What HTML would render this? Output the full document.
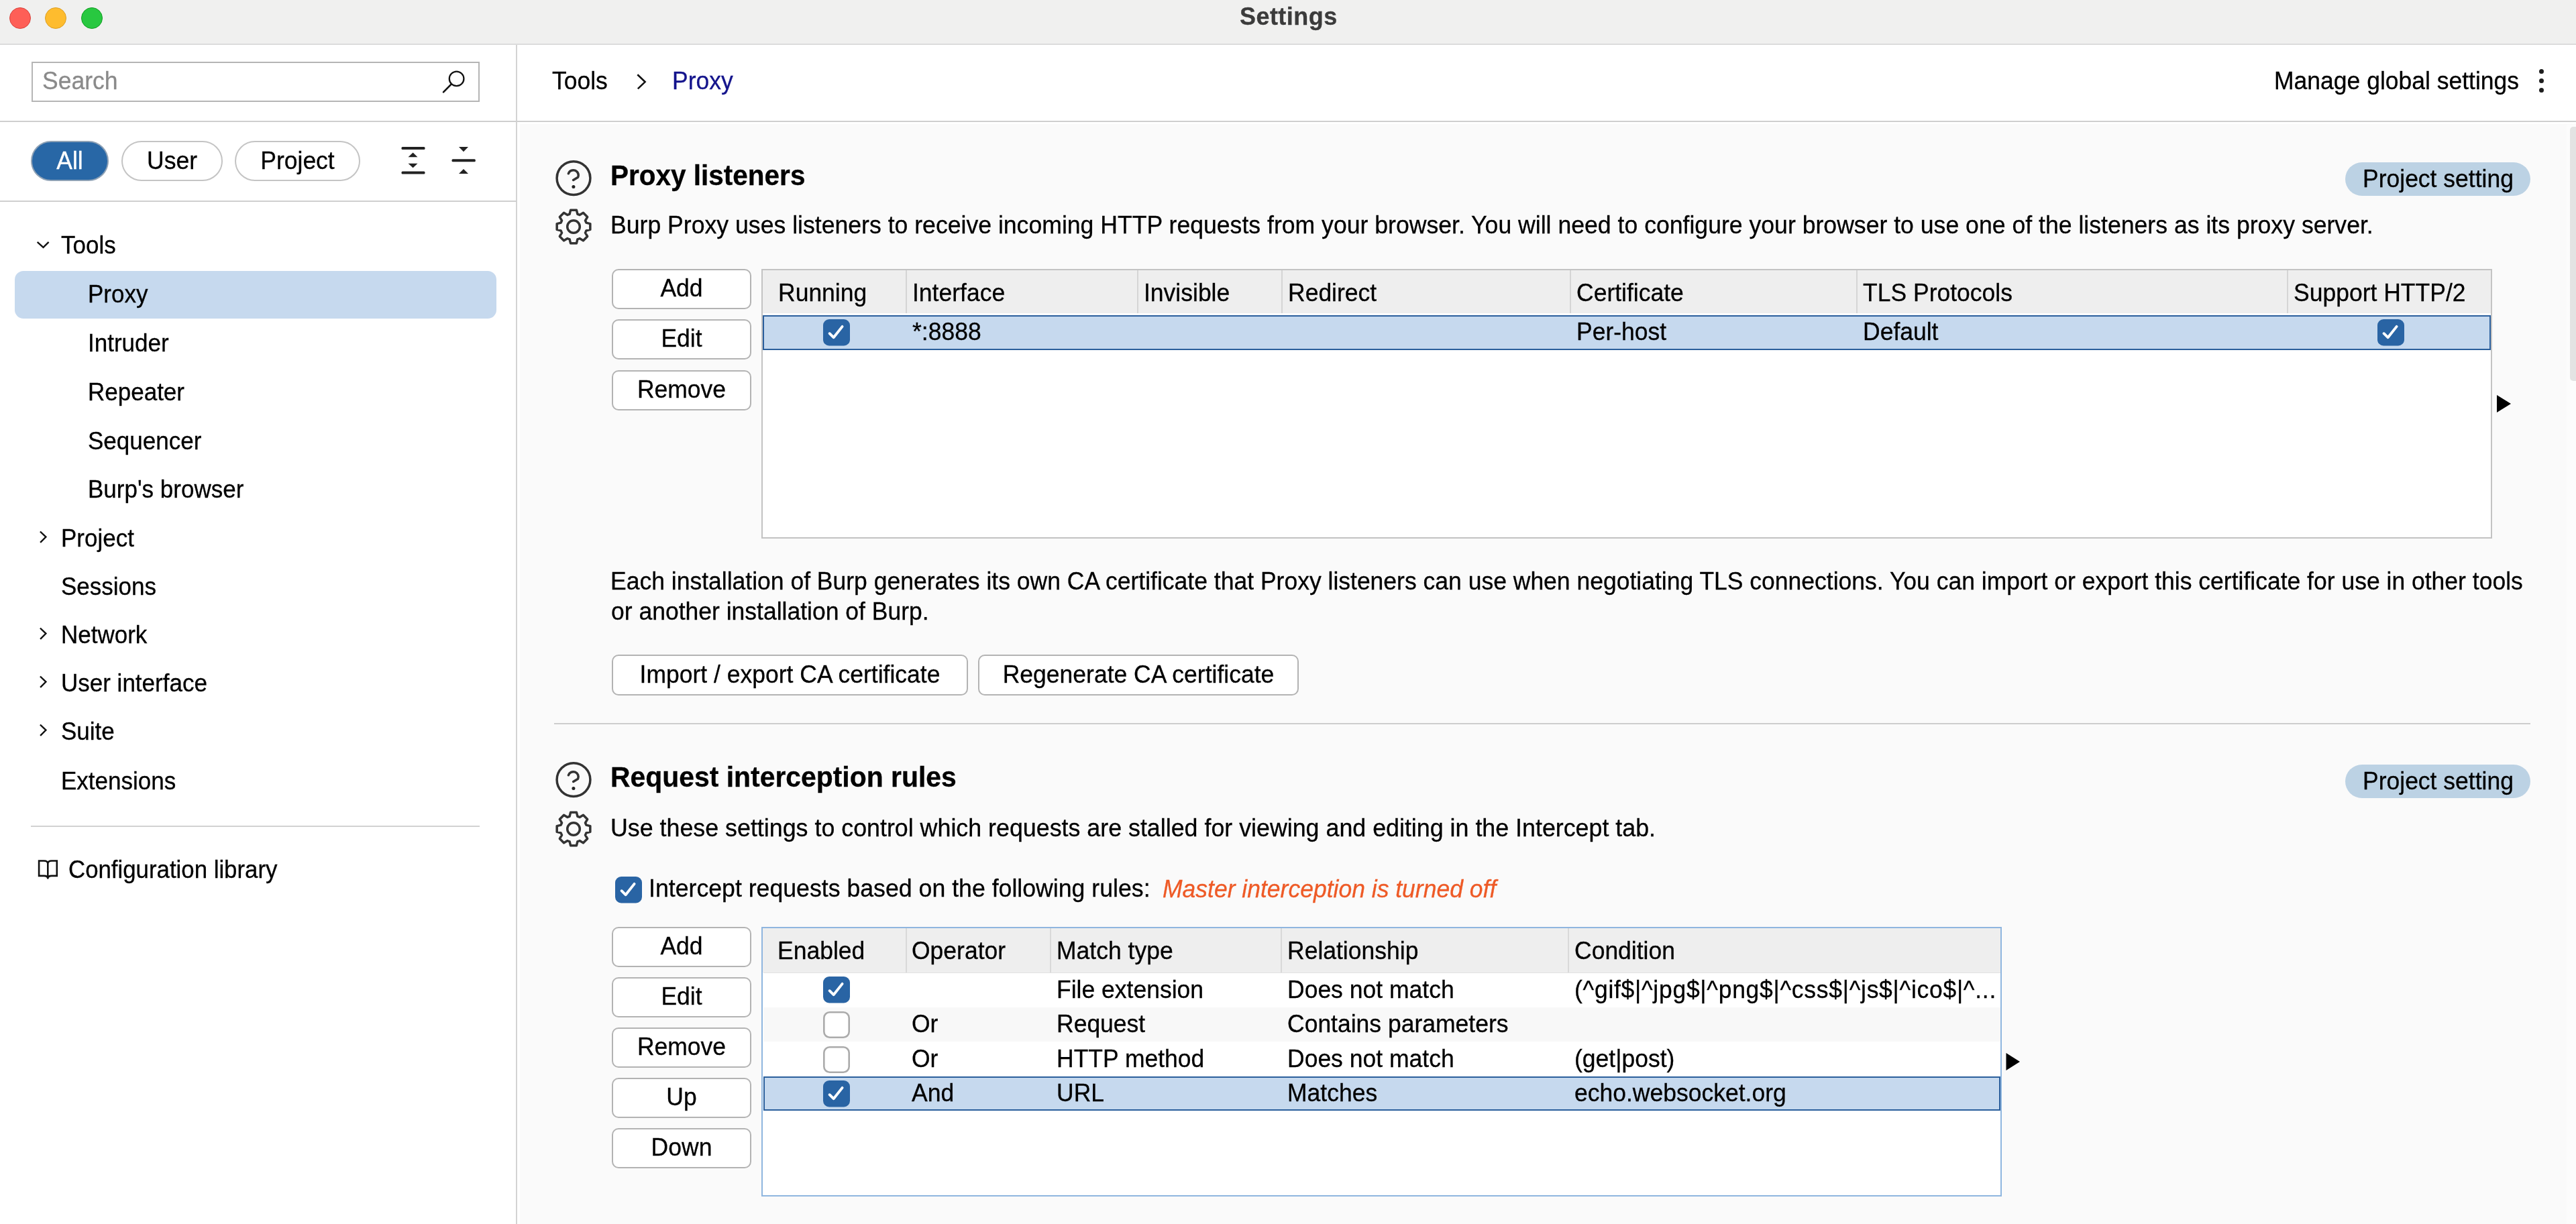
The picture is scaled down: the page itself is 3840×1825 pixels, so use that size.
<!DOCTYPE html>
<html><head><meta charset="utf-8"><title>Settings</title>
<style>
html,body{margin:0;padding:0;width:3840px;height:1825px;overflow:hidden;background:#f9f9f9}
body{position:relative;font-family:"Liberation Sans",sans-serif}
.b{position:absolute;display:block}
.t{position:absolute;line-height:1;white-space:nowrap;font-family:"Liberation Sans",sans-serif;will-change:transform;-webkit-text-stroke:0.3px currentColor}
</style></head><body>
<div class="b" style="left:0px;top:0px;width:3840px;height:65px;background:#f0f0ef"></div>
<div class="b" style="left:0px;top:65px;width:3840px;height:2px;background:#dcdcdc"></div>
<div class="b" style="left:13.600000000000001px;top:10.8px;width:32px;height:32px;border-radius:50%;background:#fe5f57;box-sizing:border-box;border:1.5px solid #d9453e"></div>
<div class="b" style="left:67.3px;top:10.8px;width:32px;height:32px;border-radius:50%;background:#febc2e;box-sizing:border-box;border:1.5px solid #dc9f24"></div>
<div class="b" style="left:121.30000000000001px;top:10.8px;width:32px;height:32px;border-radius:50%;background:#28c840;box-sizing:border-box;border:1.5px solid #159f25"></div>
<div class="t" style="left:1848.0px;top:7.0px;font-size:36px;font-weight:700;color:#3b3b3b;transform-origin:0 30.5px;transform:scaleY(1.035);letter-spacing:0.45px;">Settings</div>
<div class="b" style="left:0px;top:67px;width:770px;height:1758px;background:#ffffff"></div>
<div class="b" style="left:769px;top:67px;width:2px;height:1758px;background:#d3d3d3"></div>
<div class="b" style="left:47px;top:92px;width:668px;height:60px;box-sizing:border-box;border:2px solid #b5b5b5;background:#fff"></div>
<div class="t" style="left:63.0px;top:103.9px;font-size:35.5px;font-weight:400;color:#8a8a8a;transform-origin:0 30.1px;transform:scaleY(1.035);">Search</div>
<svg class="b" style="left:650px;top:100px;" width="50" height="50" viewBox="0 0 50 50"><circle cx="30.6" cy="17.4" r="10.8" fill="none" stroke="#111" stroke-width="2.3"/><line x1="22.6" y1="25.6" x2="11" y2="37.4" stroke="#111" stroke-width="2.6" stroke-linecap="round"/></svg>
<div class="b" style="left:0px;top:180px;width:770px;height:2px;background:#cfcfcf"></div>
<div class="b" style="left:46px;top:210px;width:116px;height:60px;border-radius:30px;background:#2867a6;box-sizing:border-box;border:2px solid #8fa2b6"></div>
<div class="t" style="left:46px;width:116px;text-align:center;top:222.9px;font-size:35.5px;font-weight:400;color:#ffffff;transform-origin:0 30.1px;transform:scaleY(1.035)">All</div>
<div class="b" style="left:181px;top:210px;width:151px;height:60px;border-radius:30px;background:#fff;box-sizing:border-box;border:2px solid #c4c4c4"></div>
<div class="t" style="left:181px;width:151px;text-align:center;top:222.9px;font-size:35.5px;font-weight:400;color:#000;transform-origin:0 30.1px;transform:scaleY(1.035)">User</div>
<div class="b" style="left:350px;top:210px;width:187px;height:60px;border-radius:30px;background:#fff;box-sizing:border-box;border:2px solid #c4c4c4"></div>
<div class="t" style="left:350px;width:187px;text-align:center;top:222.9px;font-size:35.5px;font-weight:400;color:#000;transform-origin:0 30.1px;transform:scaleY(1.035)">Project</div>
<svg class="b" style="left:590px;top:210px;" width="130" height="60" viewBox="0 0 130 60"><rect x="8.5" y="9" width="35" height="4" rx="1.5" fill="#222"/><polygon points="18.5,24.3 32.5,24.3 25.6,17.6" fill="#222"/><polygon points="18.5,33.8 32.5,33.8 25.6,40.2" fill="#222"/><rect x="8.5" y="45.5" width="35" height="4" rx="1.5" fill="#222"/><polygon points="94,9 108,9 101,16.3" fill="#222"/><rect x="83.5" y="27.2" width="35.3" height="4" rx="1.5" fill="#222"/><polygon points="94,49 108,49 101,42" fill="#222"/></svg>
<div class="b" style="left:0px;top:299px;width:770px;height:2px;background:#cfcfcf"></div>
<svg class="b" style="left:52px;top:356px;" width="24" height="16" viewBox="0 0 24 16"><polyline points="3.7,4.8 12.5,12.9 20.6,4.8" fill="none" stroke="#111" stroke-width="2.4"/></svg>
<div class="t" style="left:91.3px;top:348.4px;font-size:35px;font-weight:400;color:#000;transform-origin:0 29.6px;transform:scaleY(1.035);">Tools</div>
<div class="b" style="left:22px;top:404px;width:718px;height:71px;border-radius:13px;background:#c6d9ee"></div>
<div class="t" style="left:131.0px;top:421.4px;font-size:35px;font-weight:400;color:#000;transform-origin:0 29.6px;transform:scaleY(1.035);">Proxy</div>
<div class="t" style="left:131.0px;top:494.4px;font-size:35px;font-weight:400;color:#000;transform-origin:0 29.6px;transform:scaleY(1.035);">Intruder</div>
<div class="t" style="left:131.0px;top:567.4px;font-size:35px;font-weight:400;color:#000;transform-origin:0 29.6px;transform:scaleY(1.035);">Repeater</div>
<div class="t" style="left:131.0px;top:640.4px;font-size:35px;font-weight:400;color:#000;transform-origin:0 29.6px;transform:scaleY(1.035);">Sequencer</div>
<div class="t" style="left:131.0px;top:712.4px;font-size:35px;font-weight:400;color:#000;transform-origin:0 29.6px;transform:scaleY(1.035);">Burp's browser</div>
<svg class="b" style="left:56px;top:788px;" width="16" height="24" viewBox="0 0 16 24"><polyline points="3.9,4.5 12.4,12.6 4.1,20.9" fill="none" stroke="#111" stroke-width="2.4"/></svg>
<div class="t" style="left:91.0px;top:785.4px;font-size:35px;font-weight:400;color:#000;transform-origin:0 29.6px;transform:scaleY(1.035);">Project</div>
<div class="t" style="left:91.0px;top:857.4px;font-size:35px;font-weight:400;color:#000;transform-origin:0 29.6px;transform:scaleY(1.035);">Sessions</div>
<svg class="b" style="left:56px;top:932px;" width="16" height="24" viewBox="0 0 16 24"><polyline points="3.9,4.5 12.4,12.6 4.1,20.9" fill="none" stroke="#111" stroke-width="2.4"/></svg>
<div class="t" style="left:91.0px;top:929.4px;font-size:35px;font-weight:400;color:#000;transform-origin:0 29.6px;transform:scaleY(1.035);">Network</div>
<svg class="b" style="left:56px;top:1004px;" width="16" height="24" viewBox="0 0 16 24"><polyline points="3.9,4.5 12.4,12.6 4.1,20.9" fill="none" stroke="#111" stroke-width="2.4"/></svg>
<div class="t" style="left:91.0px;top:1001.4px;font-size:35px;font-weight:400;color:#000;transform-origin:0 29.6px;transform:scaleY(1.035);">User interface</div>
<svg class="b" style="left:56px;top:1076px;" width="16" height="24" viewBox="0 0 16 24"><polyline points="3.9,4.5 12.4,12.6 4.1,20.9" fill="none" stroke="#111" stroke-width="2.4"/></svg>
<div class="t" style="left:91.0px;top:1073.4px;font-size:35px;font-weight:400;color:#000;transform-origin:0 29.6px;transform:scaleY(1.035);">Suite</div>
<div class="t" style="left:91.0px;top:1147.4px;font-size:35px;font-weight:400;color:#000;transform-origin:0 29.6px;transform:scaleY(1.035);">Extensions</div>
<div class="b" style="left:46px;top:1231px;width:669px;height:2px;background:#d2d2d2"></div>
<svg class="b" style="left:50px;top:1276px;" width="44" height="40" viewBox="0 0 44 40"><path d="M8.1,7.5 H15.6 Q21.3,7.5 21.3,11.8 Q21.3,7.5 27,7.5 H34.8 V29.9 H27 Q21.3,29.9 21.3,33.8 Q21.3,29.9 15.6,29.9 H8.1 Z M21.3,11.8 V34.6" fill="none" stroke="#111" stroke-width="2.6"/></svg>
<div class="t" style="left:102.0px;top:1279.5px;font-size:34.8px;font-weight:400;color:#000;transform-origin:0 29.5px;transform:scaleY(1.035);">Configuration library</div>
<div class="b" style="left:771px;top:67px;width:3069px;height:113px;background:#ffffff"></div>
<div class="b" style="left:771px;top:180px;width:3069px;height:2px;background:#cfcfcf"></div>
<div class="t" style="left:823.0px;top:103.9px;font-size:35.5px;font-weight:400;color:#000;transform-origin:0 30.1px;transform:scaleY(1.035);">Tools</div>
<svg class="b" style="left:940px;top:100px;" width="30" height="40" viewBox="0 0 30 40"><polyline points="10.3,11.3 21.6,22.1 10.8,32.4" fill="none" stroke="#111" stroke-width="2.6"/></svg>
<div class="t" style="left:1002.0px;top:103.9px;font-size:35.5px;font-weight:400;color:#14148c;transform-origin:0 30.1px;transform:scaleY(1.035);">Proxy</div>
<div class="t" style="left:3390.0px;top:103.9px;font-size:35.5px;font-weight:400;color:#000;transform-origin:0 30.1px;transform:scaleY(1.035);">Manage global settings</div>
<div class="b" style="left:3785.4px;top:103.2px;width:7px;height:7px;border-radius:50%;background:#1e1e1e"></div>
<div class="b" style="left:3785.4px;top:117.1px;width:7px;height:7px;border-radius:50%;background:#1e1e1e"></div>
<div class="b" style="left:3785.4px;top:131.1px;width:7px;height:7px;border-radius:50%;background:#1e1e1e"></div>
<div class="b" style="left:771px;top:182px;width:3069px;height:1643px;background:#ffffff"></div>
<div class="b" style="left:775px;top:185px;width:3065px;height:1640px;background:#fafafa"></div>
<div class="b" style="left:3826px;top:186px;width:14px;height:1639px;background:#fcfcfc"></div>
<div class="b" style="left:3831px;top:189px;width:9px;height:379px;border-radius:5px 0 0 5px;background:#e3e3e3"></div>
<svg class="b" style="left:825px;top:236px;" width="60" height="60" viewBox="0 0 60 60"><circle cx="30" cy="29.6" r="24.9" fill="none" stroke="#333" stroke-width="3.5"/><path d="M22.4,22.8 A7.6,7.6 0 1 1 36.6,28.2 L29.6,32.4" fill="none" stroke="#333" stroke-width="3.5" stroke-linecap="round" stroke-linejoin="round"/><circle cx="29.9" cy="42.4" r="2.5" fill="#222"/></svg>
<svg class="b" style="left:825px;top:308px;" width="60" height="60" viewBox="0 0 60 60"><path d="M24.08,11.21 L25.62,5.18 L34.38,5.18 L35.92,11.21 A19.7,19.7 0 0 1 39.10,12.53 L44.45,9.36 L50.64,15.55 L47.47,20.90 A19.7,19.7 0 0 1 48.79,24.08 L54.82,25.62 L54.82,34.38 L48.79,35.92 A19.7,19.7 0 0 1 47.47,39.10 L50.64,44.45 L44.45,50.64 L39.10,47.47 A19.7,19.7 0 0 1 35.92,48.79 L34.38,54.82 L25.62,54.82 L24.08,48.79 A19.7,19.7 0 0 1 20.90,47.47 L15.55,50.64 L9.36,44.45 L12.53,39.10 A19.7,19.7 0 0 1 11.21,35.92 L5.18,34.38 L5.18,25.62 L11.21,24.08 A19.7,19.7 0 0 1 12.53,20.90 L9.36,15.55 L15.55,9.36 L20.90,12.53 A19.7,19.7 0 0 1 24.08,11.21 Z" fill="none" stroke="#333" stroke-width="3.5" stroke-linejoin="round"/><circle cx="30" cy="30" r="9.3" fill="none" stroke="#333" stroke-width="3.5"/></svg>
<div class="t" style="left:910.0px;top:241.7px;font-size:40.5px;font-weight:700;color:#000;transform-origin:0 34.3px;transform:scaleY(1.035);">Proxy listeners</div>
<div class="b" style="left:3496px;top:242px;width:276px;height:50px;border-radius:25px;background:#bcd2e4"></div>
<div class="t" style="left:3522.0px;top:250.1px;font-size:35.5px;font-weight:400;color:#000;transform-origin:0 30.1px;transform:scaleY(1.035);">Project setting</div>
<div class="t" style="left:910.0px;top:318.8px;font-size:35.62px;font-weight:400;color:#000;transform-origin:0 30.2px;transform:scaleY(1.035);">Burp Proxy uses listeners to receive incoming HTTP requests from your browser. You will need to configure your browser to use one of the listeners as its proxy server.</div>
<div class="b" style="left:912px;top:401px;width:208px;height:60px;box-sizing:border-box;border:2px solid #b3b3b3;border-radius:10px;background:#fff"></div>
<div class="t" style="left:912px;width:208px;text-align:center;top:413.4px;font-size:35.5px;font-weight:400;color:#000;transform-origin:0 30.1px;transform:scaleY(1.035)">Add</div>
<div class="b" style="left:912px;top:476px;width:208px;height:60px;box-sizing:border-box;border:2px solid #b3b3b3;border-radius:10px;background:#fff"></div>
<div class="t" style="left:912px;width:208px;text-align:center;top:488.4px;font-size:35.5px;font-weight:400;color:#000;transform-origin:0 30.1px;transform:scaleY(1.035)">Edit</div>
<div class="b" style="left:912px;top:552px;width:208px;height:60px;box-sizing:border-box;border:2px solid #b3b3b3;border-radius:10px;background:#fff"></div>
<div class="t" style="left:912px;width:208px;text-align:center;top:564.4px;font-size:35.5px;font-weight:400;color:#000;transform-origin:0 30.1px;transform:scaleY(1.035)">Remove</div>
<div class="b" style="left:1135px;top:401px;width:2580px;height:402px;box-sizing:border-box;border:2px solid #c3c3c3;background:#fff"></div>
<div class="b" style="left:1137px;top:403px;width:2576px;height:64px;background:#eeeeee"></div>
<div class="b" style="left:1350px;top:403px;width:1.5px;height:64px;background:#d5d5d5"></div>
<div class="b" style="left:1695px;top:403px;width:1.5px;height:64px;background:#d5d5d5"></div>
<div class="b" style="left:1910px;top:403px;width:1.5px;height:64px;background:#d5d5d5"></div>
<div class="b" style="left:2340px;top:403px;width:1.5px;height:64px;background:#d5d5d5"></div>
<div class="b" style="left:2767px;top:403px;width:1.5px;height:64px;background:#d5d5d5"></div>
<div class="b" style="left:3409px;top:403px;width:1.5px;height:64px;background:#d5d5d5"></div>
<div class="t" style="left:1159.5px;top:420.0px;font-size:35.5px;font-weight:400;color:#000;transform-origin:0 30.1px;transform:scaleY(1.035);">Running</div>
<div class="t" style="left:1359.5px;top:420.0px;font-size:35.5px;font-weight:400;color:#000;transform-origin:0 30.1px;transform:scaleY(1.035);">Interface</div>
<div class="t" style="left:1704.5px;top:420.0px;font-size:35.5px;font-weight:400;color:#000;transform-origin:0 30.1px;transform:scaleY(1.035);">Invisible</div>
<div class="t" style="left:1919.5px;top:420.0px;font-size:35.5px;font-weight:400;color:#000;transform-origin:0 30.1px;transform:scaleY(1.035);">Redirect</div>
<div class="t" style="left:2349.5px;top:420.0px;font-size:35.5px;font-weight:400;color:#000;transform-origin:0 30.1px;transform:scaleY(1.035);">Certificate</div>
<div class="t" style="left:2776.5px;top:420.0px;font-size:35.5px;font-weight:400;color:#000;transform-origin:0 30.1px;transform:scaleY(1.035);">TLS Protocols</div>
<div class="t" style="left:3418.5px;top:420.0px;font-size:35.5px;font-weight:400;color:#000;transform-origin:0 30.1px;transform:scaleY(1.035);">Support HTTP/2</div>
<div class="b" style="left:1137px;top:470px;width:2576px;height:52px;box-sizing:border-box;border:2px solid #2b5f9c;background:#c6d9ee"></div>
<svg class="b" style="left:1227px;top:476px;" width="40" height="40" viewBox="0 0 40 40"><rect x="0" y="0" width="40" height="39.5" rx="9" fill="#2964a4"/><polyline points="9.6,21.2 15.6,27.2 28.6,10.9" fill="none" stroke="#fff" stroke-width="3.9" stroke-linecap="round" stroke-linejoin="round"/></svg>
<div class="t" style="left:1360.0px;top:477.9px;font-size:35.5px;font-weight:400;color:#000;transform-origin:0 30.1px;transform:scaleY(1.035);">*:8888</div>
<div class="t" style="left:2350.0px;top:477.9px;font-size:35.5px;font-weight:400;color:#000;transform-origin:0 30.1px;transform:scaleY(1.035);">Per-host</div>
<div class="t" style="left:2777.0px;top:477.9px;font-size:35.5px;font-weight:400;color:#000;transform-origin:0 30.1px;transform:scaleY(1.035);">Default</div>
<svg class="b" style="left:3544px;top:476px;" width="40" height="40" viewBox="0 0 40 40"><rect x="0" y="0" width="40" height="39.5" rx="9" fill="#2964a4"/><polyline points="9.6,21.2 15.6,27.2 28.6,10.9" fill="none" stroke="#fff" stroke-width="3.9" stroke-linecap="round" stroke-linejoin="round"/></svg>
<svg class="b" style="left:3718px;top:585px;" width="30" height="34" viewBox="0 0 30 34"><polygon points="4,4 25,17 4,30" fill="#000"/></svg>
<div class="t" style="left:910.0px;top:849.9px;font-size:35.5px;font-weight:400;color:#000;transform-origin:0 30.1px;transform:scaleY(1.035);">Each installation of Burp generates its own CA certificate that Proxy listeners can use when negotiating TLS connections. You can import or export this certificate for use in other tools</div>
<div class="t" style="left:911.0px;top:894.9px;font-size:35.5px;font-weight:400;color:#000;transform-origin:0 30.1px;transform:scaleY(1.035);">or another installation of Burp.</div>
<div class="b" style="left:912px;top:976px;width:531px;height:61px;box-sizing:border-box;border:2px solid #b3b3b3;border-radius:10px;background:#fff"></div>
<div class="t" style="left:912px;width:531px;text-align:center;top:988.9px;font-size:35.5px;font-weight:400;color:#000;transform-origin:0 30.1px;transform:scaleY(1.035)">Import / export CA certificate</div>
<div class="b" style="left:1458px;top:976px;width:478px;height:61px;box-sizing:border-box;border:2px solid #b3b3b3;border-radius:10px;background:#fff"></div>
<div class="t" style="left:1458px;width:478px;text-align:center;top:988.9px;font-size:35.5px;font-weight:400;color:#000;transform-origin:0 30.1px;transform:scaleY(1.035)">Regenerate CA certificate</div>
<div class="b" style="left:826px;top:1078px;width:2946px;height:2px;background:#cdcdcd"></div>
<svg class="b" style="left:825px;top:1133px;" width="60" height="60" viewBox="0 0 60 60"><circle cx="30" cy="29.6" r="24.9" fill="none" stroke="#333" stroke-width="3.5"/><path d="M22.4,22.8 A7.6,7.6 0 1 1 36.6,28.2 L29.6,32.4" fill="none" stroke="#333" stroke-width="3.5" stroke-linecap="round" stroke-linejoin="round"/><circle cx="29.9" cy="42.4" r="2.5" fill="#222"/></svg>
<svg class="b" style="left:825px;top:1206px;" width="60" height="60" viewBox="0 0 60 60"><path d="M24.08,11.21 L25.62,5.18 L34.38,5.18 L35.92,11.21 A19.7,19.7 0 0 1 39.10,12.53 L44.45,9.36 L50.64,15.55 L47.47,20.90 A19.7,19.7 0 0 1 48.79,24.08 L54.82,25.62 L54.82,34.38 L48.79,35.92 A19.7,19.7 0 0 1 47.47,39.10 L50.64,44.45 L44.45,50.64 L39.10,47.47 A19.7,19.7 0 0 1 35.92,48.79 L34.38,54.82 L25.62,54.82 L24.08,48.79 A19.7,19.7 0 0 1 20.90,47.47 L15.55,50.64 L9.36,44.45 L12.53,39.10 A19.7,19.7 0 0 1 11.21,35.92 L5.18,34.38 L5.18,25.62 L11.21,24.08 A19.7,19.7 0 0 1 12.53,20.90 L9.36,15.55 L15.55,9.36 L20.90,12.53 A19.7,19.7 0 0 1 24.08,11.21 Z" fill="none" stroke="#333" stroke-width="3.5" stroke-linejoin="round"/><circle cx="30" cy="30" r="9.3" fill="none" stroke="#333" stroke-width="3.5"/></svg>
<div class="t" style="left:910.0px;top:1139.4px;font-size:40.9px;font-weight:700;color:#000;transform-origin:0 34.6px;transform:scaleY(1.035);">Request interception rules</div>
<div class="b" style="left:3496px;top:1140px;width:276px;height:50px;border-radius:25px;background:#bcd2e4"></div>
<div class="t" style="left:3522.0px;top:1148.1px;font-size:35.5px;font-weight:400;color:#000;transform-origin:0 30.1px;transform:scaleY(1.035);">Project setting</div>
<div class="t" style="left:910.0px;top:1217.7px;font-size:35.8px;font-weight:400;color:#000;transform-origin:0 30.3px;transform:scaleY(1.035);">Use these settings to control which requests are stalled for viewing and editing in the Intercept tab.</div>
<svg class="b" style="left:917px;top:1307px;" width="40" height="40" viewBox="0 0 40 40"><rect x="0" y="0" width="40" height="39.5" rx="9" fill="#2964a4"/><polyline points="9.6,21.2 15.6,27.2 28.6,10.9" fill="none" stroke="#fff" stroke-width="3.9" stroke-linecap="round" stroke-linejoin="round"/></svg>
<div class="t" style="left:967.0px;top:1307.8px;font-size:35.68px;font-weight:400;color:#000;transform-origin:0 30.2px;transform:scaleY(1.035);">Intercept requests based on the following rules:</div>
<div class="t" style="left:1733.0px;top:1308.9px;font-size:35.5px;font-weight:400;color:#ee5a26;transform-origin:0 30.1px;transform:scaleY(1.035);font-style:italic;">Master interception is turned off</div>
<div class="b" style="left:912px;top:1382px;width:208px;height:60px;box-sizing:border-box;border:2px solid #b3b3b3;border-radius:10px;background:#fff"></div>
<div class="t" style="left:912px;width:208px;text-align:center;top:1394.4px;font-size:35.5px;font-weight:400;color:#000;transform-origin:0 30.1px;transform:scaleY(1.035)">Add</div>
<div class="b" style="left:912px;top:1457px;width:208px;height:60px;box-sizing:border-box;border:2px solid #b3b3b3;border-radius:10px;background:#fff"></div>
<div class="t" style="left:912px;width:208px;text-align:center;top:1469.4px;font-size:35.5px;font-weight:400;color:#000;transform-origin:0 30.1px;transform:scaleY(1.035)">Edit</div>
<div class="b" style="left:912px;top:1532px;width:208px;height:60px;box-sizing:border-box;border:2px solid #b3b3b3;border-radius:10px;background:#fff"></div>
<div class="t" style="left:912px;width:208px;text-align:center;top:1544.4px;font-size:35.5px;font-weight:400;color:#000;transform-origin:0 30.1px;transform:scaleY(1.035)">Remove</div>
<div class="b" style="left:912px;top:1607px;width:208px;height:60px;box-sizing:border-box;border:2px solid #b3b3b3;border-radius:10px;background:#fff"></div>
<div class="t" style="left:912px;width:208px;text-align:center;top:1619.4px;font-size:35.5px;font-weight:400;color:#000;transform-origin:0 30.1px;transform:scaleY(1.035)">Up</div>
<div class="b" style="left:912px;top:1682px;width:208px;height:60px;box-sizing:border-box;border:2px solid #b3b3b3;border-radius:10px;background:#fff"></div>
<div class="t" style="left:912px;width:208px;text-align:center;top:1694.4px;font-size:35.5px;font-weight:400;color:#000;transform-origin:0 30.1px;transform:scaleY(1.035)">Down</div>
<div class="b" style="left:1135px;top:1382px;width:1849px;height:402px;box-sizing:border-box;border:2px solid #8fb6df;background:#fff"></div>
<div class="b" style="left:1137px;top:1384px;width:1845px;height:66px;background:#eeeeee"></div>
<div class="b" style="left:1138px;top:1450px;width:1844px;height:1px;background:#e2e2e2"></div>
<div class="b" style="left:1350px;top:1384px;width:2px;height:66px;background:#d9d9d9"></div>
<div class="b" style="left:1565px;top:1384px;width:2px;height:66px;background:#d9d9d9"></div>
<div class="b" style="left:1909px;top:1384px;width:2px;height:66px;background:#d9d9d9"></div>
<div class="b" style="left:2337px;top:1384px;width:2px;height:66px;background:#d9d9d9"></div>
<div class="t" style="left:1159.0px;top:1401.0px;font-size:35.5px;font-weight:400;color:#000;transform-origin:0 30.1px;transform:scaleY(1.035);">Enabled</div>
<div class="t" style="left:1359.0px;top:1401.0px;font-size:35.5px;font-weight:400;color:#000;transform-origin:0 30.1px;transform:scaleY(1.035);">Operator</div>
<div class="t" style="left:1575.0px;top:1401.0px;font-size:35.5px;font-weight:400;color:#000;transform-origin:0 30.1px;transform:scaleY(1.035);">Match type</div>
<div class="t" style="left:1919.0px;top:1401.0px;font-size:35.5px;font-weight:400;color:#000;transform-origin:0 30.1px;transform:scaleY(1.035);">Relationship</div>
<div class="t" style="left:2347.0px;top:1401.0px;font-size:35.5px;font-weight:400;color:#000;transform-origin:0 30.1px;transform:scaleY(1.035);">Condition</div>
<div class="b" style="left:1138px;top:1502px;width:1844px;height:51px;background:#f8f8f8"></div>
<div class="b" style="left:1138px;top:1605px;width:1844px;height:51px;box-sizing:border-box;border:2px solid #2b5f9c;background:#c6d9ee"></div>
<svg class="b" style="left:1227px;top:1456px;" width="40" height="40" viewBox="0 0 40 40"><rect x="0" y="0" width="40" height="39.5" rx="9" fill="#2964a4"/><polyline points="9.6,21.2 15.6,27.2 28.6,10.9" fill="none" stroke="#fff" stroke-width="3.9" stroke-linecap="round" stroke-linejoin="round"/></svg>
<svg class="b" style="left:1227px;top:1508px;" width="40" height="40" viewBox="0 0 40 40"><rect x="1.3" y="1.3" width="37.4" height="37.4" rx="8.5" fill="#fff" stroke="#ababab" stroke-width="2.6"/></svg>
<svg class="b" style="left:1227px;top:1560px;" width="40" height="40" viewBox="0 0 40 40"><rect x="1.3" y="1.3" width="37.4" height="37.4" rx="8.5" fill="#fff" stroke="#ababab" stroke-width="2.6"/></svg>
<svg class="b" style="left:1227px;top:1611px;" width="40" height="40" viewBox="0 0 40 40"><rect x="0" y="0" width="40" height="39.5" rx="9" fill="#2964a4"/><polyline points="9.6,21.2 15.6,27.2 28.6,10.9" fill="none" stroke="#fff" stroke-width="3.9" stroke-linecap="round" stroke-linejoin="round"/></svg>
<div class="t" style="left:1575.0px;top:1459.1px;font-size:35.5px;font-weight:400;color:#000;transform-origin:0 30.1px;transform:scaleY(1.035);">File extension</div>
<div class="t" style="left:1919.0px;top:1459.1px;font-size:35.5px;font-weight:400;color:#000;transform-origin:0 30.1px;transform:scaleY(1.035);">Does not match</div>
<div class="t" style="left:2347.0px;top:1459.1px;font-size:35.5px;font-weight:400;color:#000;transform-origin:0 30.1px;transform:scaleY(1.035);letter-spacing:0.72px;">(^gif$|^jpg$|^png$|^css$|^js$|^ico$|^...</div>
<div class="t" style="left:1359.0px;top:1510.3px;font-size:35.5px;font-weight:400;color:#000;transform-origin:0 30.1px;transform:scaleY(1.035);">Or</div>
<div class="t" style="left:1575.0px;top:1510.3px;font-size:35.5px;font-weight:400;color:#000;transform-origin:0 30.1px;transform:scaleY(1.035);">Request</div>
<div class="t" style="left:1919.0px;top:1510.3px;font-size:35.5px;font-weight:400;color:#000;transform-origin:0 30.1px;transform:scaleY(1.035);">Contains parameters</div>
<div class="t" style="left:1359.0px;top:1561.5px;font-size:35.5px;font-weight:400;color:#000;transform-origin:0 30.1px;transform:scaleY(1.035);">Or</div>
<div class="t" style="left:1575.0px;top:1561.5px;font-size:35.5px;font-weight:400;color:#000;transform-origin:0 30.1px;transform:scaleY(1.035);">HTTP method</div>
<div class="t" style="left:1919.0px;top:1561.5px;font-size:35.5px;font-weight:400;color:#000;transform-origin:0 30.1px;transform:scaleY(1.035);">Does not match</div>
<div class="t" style="left:2347.0px;top:1561.5px;font-size:35.5px;font-weight:400;color:#000;transform-origin:0 30.1px;transform:scaleY(1.035);">(get|post)</div>
<div class="t" style="left:1359.0px;top:1612.7px;font-size:35.5px;font-weight:400;color:#000;transform-origin:0 30.1px;transform:scaleY(1.035);">And</div>
<div class="t" style="left:1575.0px;top:1612.7px;font-size:35.5px;font-weight:400;color:#000;transform-origin:0 30.1px;transform:scaleY(1.035);">URL</div>
<div class="t" style="left:1919.0px;top:1612.7px;font-size:35.5px;font-weight:400;color:#000;transform-origin:0 30.1px;transform:scaleY(1.035);">Matches</div>
<div class="t" style="left:2347.0px;top:1612.7px;font-size:35.5px;font-weight:400;color:#000;transform-origin:0 30.1px;transform:scaleY(1.035);">echo.websocket.org</div>
<svg class="b" style="left:2986px;top:1566px;" width="30" height="34" viewBox="0 0 30 34"><polygon points="4.5,4 25,17 4.5,30" fill="#000"/></svg>
</body></html>
